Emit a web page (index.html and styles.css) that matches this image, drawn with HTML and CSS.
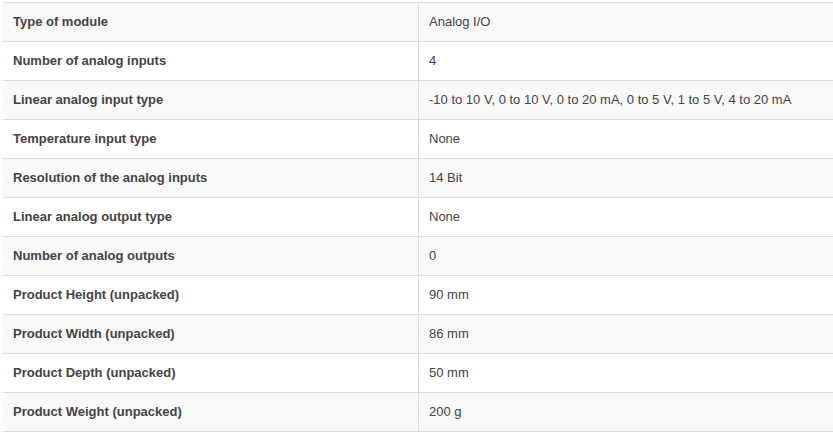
FILE: index.html
```html
<!DOCTYPE html>
<html>
<head>
<meta charset="utf-8">
<link rel="stylesheet" href="styles.css">
</head>
<body>
<table class="specs">
<tbody>
<tr><th>Type of module</th><td>Analog I/O</td></tr>
<tr><th>Number of analog inputs</th><td>4</td></tr>
<tr><th>Linear analog input type</th><td>-10 to 10 V, 0 to 10 V, 0 to 20 mA, 0 to 5 V, 1 to 5 V, 4 to 20 mA</td></tr>
<tr><th>Temperature input type</th><td>None</td></tr>
<tr><th>Resolution of the analog inputs</th><td>14 Bit</td></tr>
<tr><th>Linear analog output type</th><td>None</td></tr>
<tr><th>Number of analog outputs</th><td>0</td></tr>
<tr><th>Product Height (unpacked)</th><td>90 mm</td></tr>
<tr><th>Product Width (unpacked)</th><td>86 mm</td></tr>
<tr><th>Product Depth (unpacked)</th><td>50 mm</td></tr>
<tr><th>Product Weight (unpacked)</th><td>200 g</td></tr>
</tbody>
</table>
</body>
</html>
```
FILE: styles.css
```css
html, body {
  margin: 0;
  background: #fff;
}
body {
  padding: 2px 0 0 3px;
  font-family: "Liberation Sans", Arial, sans-serif;
  font-size: 13px;
  color: #444;
  overflow: hidden;
}
.specs {
  border-collapse: collapse;
  width: 832px;
  table-layout: fixed;
}
.specs tr {
  height: 39px;
}
.specs tr:nth-child(odd) {
  background: #f9f9f9;
}
.specs th, .specs td {
  border-top: 1px solid #ddd;
  border-bottom: 1px solid #ddd;
  padding: 0 10px 2px;
  text-align: left;
  vertical-align: middle;
}
.specs th {
  width: 395px;
  font-weight: bold;
  border-right: 1px solid #ddd;
}
.specs td {
  font-weight: normal;
}
```
